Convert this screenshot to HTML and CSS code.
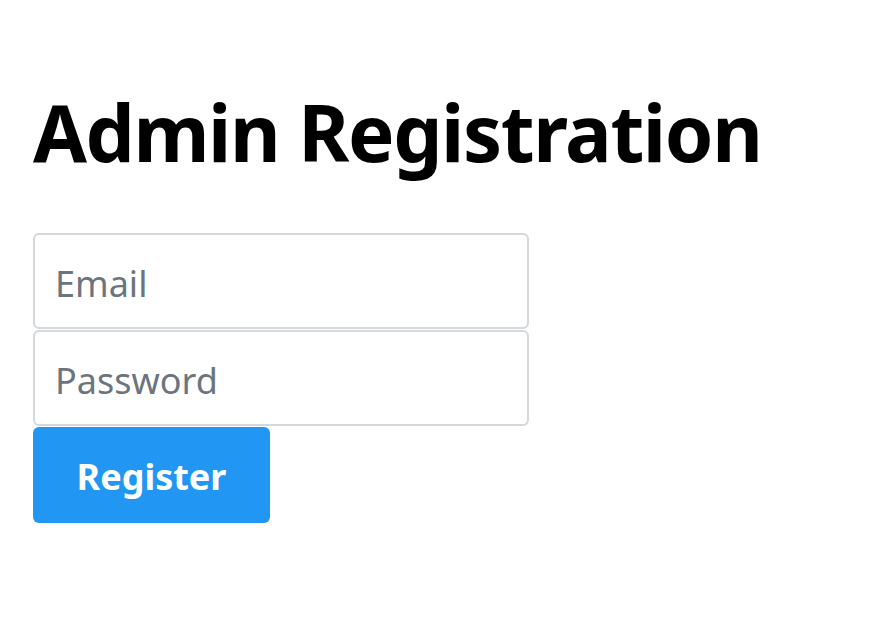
FILE: index.html
```html
<!DOCTYPE html>
<html>
<head>
<meta charset="utf-8">
<link rel="stylesheet" href="styles.css">
</head>
<body>
<div class="page">
  <h1 class="title">Admin Registration</h1>
  <form class="form">
    <input class="field" type="email" placeholder="Email">
    <input class="field" type="password" placeholder="Password">
    <button class="btn" type="button">Register</button>
  </form>
</div>
</body>
</html>
```

FILE: styles.css
```css
html, body {
  margin: 0;
  padding: 0;
  background: #fff;
}
body {
  font-family: "Noto Sans", "Open Sans", sans-serif;
}
.page {
  padding: 84px 0 0 33px;
}
.title {
  margin: 0 0 53px 0;
  font-size: 78px;
  font-weight: 700;
  line-height: 96px;
  color: #000;
  letter-spacing: -1.4px;
}
.form {
  display: flex;
  flex-direction: column;
  align-items: flex-start;
  gap: 1px;
}
.field {
  box-sizing: border-box;
  width: 496px;
  height: 96px;
  padding: 4px 20px 0;
  border: 2px solid #d4d7dc;
  border-radius: 6px;
  font-family: inherit;
  font-size: 36px;
  color: #495057;
  outline: none;
}
.field::placeholder {
  color: #6c757d;
}
.btn {
  box-sizing: border-box;
  width: 237px;
  height: 96px;
  padding-top: 4px;
  border: none;
  border-radius: 6px;
  background: #2196f3;
  color: #fff;
  font-family: inherit;
  font-weight: 700;
  font-size: 36px;
  cursor: pointer;
}
```
